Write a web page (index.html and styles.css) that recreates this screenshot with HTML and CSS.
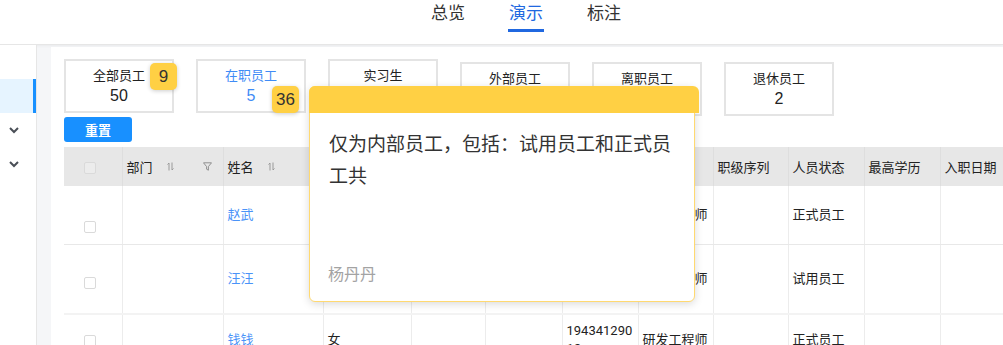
FILE: index.html
```html
<!DOCTYPE html>
<html lang="zh-CN">
<head>
<meta charset="UTF-8">
<meta name="viewport" content="width=device-width, initial-scale=1.0">
<title>员工列表 - 演示</title>
<link rel="stylesheet" href="styles.css">
</head>
<body>
<header class="topbar">
    <nav class="tabs">
        <a class="tab">总览</a>
        <a class="tab active">演示</a>
        <a class="tab">标注</a>
    </nav>
</header>

<div class="layout">
    <aside class="sidebar">
        <div class="side-item active"></div>
        <div class="side-item"><svg width="10" height="7" viewBox="0 0 10 7"><polyline points="1,1 5,5 9,1" fill="none" stroke="#4a4f57" stroke-width="2"/></svg></div>
        <div class="side-item"><svg width="10" height="7" viewBox="0 0 10 7"><polyline points="1,1 5,5 9,1" fill="none" stroke="#4a4f57" stroke-width="2"/></svg></div>
    </aside>

    <main class="panel">
        <!-- 统计卡片 -->
        <div class="cards">
            <div class="card">
                <div class="card-label">全部员工</div>
                <div class="card-num">50</div>
                <span class="badge b-all">9</span>
            </div>
            <div class="card current">
                <div class="card-label">在职员工</div>
                <div class="card-num">5</div>
                <span class="badge b-on">36</span>
            </div>
            <div class="card">
                <div class="card-label">实习生</div>
                <div class="card-num">1</div>
            </div>
            <div class="card low">
                <div class="card-label">外部员工</div>
                <div class="card-num">3</div>
            </div>
            <div class="card low">
                <div class="card-label">离职员工</div>
                <div class="card-num">4</div>
            </div>
            <div class="card low">
                <div class="card-label">退休员工</div>
                <div class="card-num">2</div>
            </div>
        </div>

        <button class="reset" type="button">重置</button>

        <table class="grid">
            <colgroup>
                <col style="width:58px"><col style="width:101px"><col style="width:100px">
                <col style="width:88px"><col style="width:74px"><col style="width:77px">
                <col style="width:76px"><col style="width:75px"><col style="width:75px">
                <col style="width:76px"><col style="width:76px"><col style="width:80px">
            </colgroup>
            <thead>
                <tr>
                    <th class="chk"><span class="box head-box"></span></th>
                    <th>
                        <div class="th-in">部门
                            <svg class="sort" width="7" height="9" viewBox="0 0 7 9"><path d="M2 8.5V1M0.5 2.5L2 1M5 0.5V8M5 8L6.5 6.5" fill="none" stroke="#999" stroke-width="1"/></svg>
                            <svg class="filter" width="9" height="9" viewBox="0 0 9 9"><path d="M0.5 0.8H8.5L5.4 4.6V8.2L3.6 7.2V4.6Z" fill="none" stroke="#888" stroke-width="0.9"/></svg>
                        </div>
                    </th>
                    <th>
                        <div class="th-in">姓名
                            <svg class="sort" width="7" height="9" viewBox="0 0 7 9"><path d="M2 8.5V1M0.5 2.5L2 1M5 0.5V8M5 8L6.5 6.5" fill="none" stroke="#999" stroke-width="1"/></svg>
                        </div>
                    </th>
                    <th></th>
                    <th></th>
                    <th></th>
                    <th></th>
                    <th></th>
                    <th>职级序列</th>
                    <th>人员状态</th>
                    <th>最高学历</th>
                    <th>入职日期</th>
                </tr>
            </thead>
            <tbody>
                <tr class="r1">
                    <td class="chk"><span class="box"></span></td>
                    <td></td>
                    <td><a class="name">赵武</a></td>
                    <td></td>
                    <td></td>
                    <td></td>
                    <td></td>
                    <td>研发工程师</td>
                    <td></td>
                    <td>正式员工</td>
                    <td></td>
                    <td></td>
                </tr>
                <tr class="r2">
                    <td class="chk"><span class="box"></span></td>
                    <td></td>
                    <td><a class="name">汪汪</a></td>
                    <td></td>
                    <td></td>
                    <td></td>
                    <td></td>
                    <td>研发工程师</td>
                    <td></td>
                    <td>试用员工</td>
                    <td></td>
                    <td></td>
                </tr>
                <tr class="r3">
                    <td class="chk"><span class="box"></span></td>
                    <td></td>
                    <td><a class="name">钱钱</a></td>
                    <td>女</td>
                    <td></td>
                    <td></td>
                    <td class="num">19434129012</td>
                    <td>研发工程师</td>
                    <td></td>
                    <td>正式员工</td>
                    <td></td>
                    <td></td>
                </tr>
            </tbody>
        </table>

        <!-- 批注气泡 -->
        <div class="tip">
            <div class="tip-head"></div>
            <p class="tip-text">仅为内部员工，包括：试用员工和正式员工共</p>
            <div class="tip-author">杨丹丹</div>
        </div>
    </main>
</div>
</body>
</html>
```

FILE: styles.css
```css
:root{
    --blue:#1890ff;
    --line:#e8e8e8;
    --yellow:#ffd044;
}
*{box-sizing:border-box;}
html,body{margin:0;height:100%;overflow:hidden;}
body{
    font-family:"Liberation Sans","Noto Sans CJK SC",sans-serif;
    color:#222;
    background:#f5f6f8;
}

/* 顶部导航 */
.topbar{
    height:45px;
    background:#fff;
    border-bottom:1px solid #e6e6e6;
    box-shadow:0 1px 3px rgba(0,0,0,.05);
}
.tabs{display:flex;gap:42px;padding-left:430px;}
.tab{
    display:flex;
    flex-direction:column;
    align-items:center;
    padding-top:2px;
    font-family:"Noto Sans CJK SC",sans-serif;
    font-size:17px;
    line-height:20px;
    color:#333;
}
.tab::after{content:"";width:36px;height:3px;margin-top:7px;}
.tab.active{color:#2068e0;}
.tab.active::after{background:#2068e0;}

.layout{display:flex;height:calc(100% - 45px);}

/* 侧边栏 */
.sidebar{
    width:37px;
    flex:none;
    background:#fff;
    border-right:1px solid #e6e6e6;
    padding-top:34px;
}
.side-item{height:34px;display:flex;align-items:center;padding-left:9px;}
.side-item.active{background:#e6f4ff;border-right:3px solid var(--blue);}

/* 主区域 */
.panel{
    flex:1;
    position:relative;
    margin:2px 0 0 14px;
    padding:12px 0 0 13px;
    background:#fff;
    overflow:hidden;
}
.cards{display:flex;align-items:flex-start;gap:22px;}
.card{
    position:relative;
    width:110px;
    height:54px;
    flex:none;
    border:2px solid #e4e4e4;
    padding-top:4px;
    text-align:center;
    background:#fff;
}
.card.low{margin-top:3px;}
.card-label{font-size:13px;line-height:20px;font-family:"Noto Sans CJK SC",sans-serif;}
.card-num{font-size:16px;line-height:22px;}
.card.current{color:#3f8cf6;}
.badge{
    position:absolute;
    width:27px;
    height:27px;
    border-radius:5px;
    background:var(--yellow);
    box-shadow:0 1px 4px rgba(0,0,0,.2);
    color:#333;
    font-size:17px;
    line-height:27px;
    text-align:center;
}
.b-all{left:84px;top:2px;}
.b-on{left:74px;top:25px;}

.reset{
    display:block;
    width:68px;
    height:25px;
    margin:1px 0 5px;
    border:none;
    border-radius:3px;
    background:var(--blue);
    color:#fff;
    font-family:"Noto Sans CJK SC",sans-serif;
    font-size:13px;
    font-weight:bold;
    padding:0;
}

/* 表格 */
.grid{
    table-layout:fixed;
    width:956px;
    border-collapse:collapse;
    font-family:Roboto,"Noto Sans CJK SC",sans-serif;
    font-size:13px;
    color:#222;
}
.grid th{
    height:39px;
    background:#e7e7e7;
    font-weight:normal;
    text-align:left;
    padding:0 4px;
    border-left:1px solid #dedede;
}
.grid th:first-child,.grid td:first-child{border-left:none;}
.th-in{display:flex;align-items:center;}
.sort{margin-left:14px;}
.filter{margin-left:auto;margin-right:7px;}
.grid td{
    padding:0 4px;
    border-left:1px solid #ececec;
    border-bottom:1px solid var(--line);
    vertical-align:middle;
    line-height:18px;
}
.r1 td{height:58px;}
.r2 td{height:70px;border-bottom:2px solid #f3f3f3;}
.r3 td{height:52px;}
.grid .num{word-break:break-all;}
.grid .chk{text-align:center;padding:0 5px 0 0;}
.box{
    display:inline-block;
    width:12px;
    height:12px;
    border:1px solid #dadada;
    border-radius:2px;
    background:#fff;
    vertical-align:middle;
}
.head-box{background:#ececec;}
.r1 .box{margin-top:24px;}
.r2 .box{margin-top:8px;}
.name{color:#4a93f8;}

/* 批注气泡 */
.tip{
    position:absolute;
    left:258px;
    top:39px;
    width:386px;
    height:216px;
    display:flex;
    flex-direction:column;
    background:#fff;
    border:1px solid #ffd970;
    border-radius:6px;
    box-shadow:0 2px 8px rgba(0,0,0,.15);
}
.tip-head{
    height:27px;
    margin:-1px -5px 0 -1px;
    background:var(--yellow);
    border-radius:6px 6px 0 0;
}
.tip-text{
    margin:0;
    padding:14px 19px 0;
    font-family:"Noto Sans CJK SC",sans-serif;
    font-size:19px;
    line-height:32px;
    color:#333;
}
.tip-author{
    margin-top:auto;
    padding:0 18px 17px;
    font-family:"Noto Sans CJK SC",sans-serif;
    font-size:16px;
    line-height:22px;
    color:#a3a3a3;
}
```
